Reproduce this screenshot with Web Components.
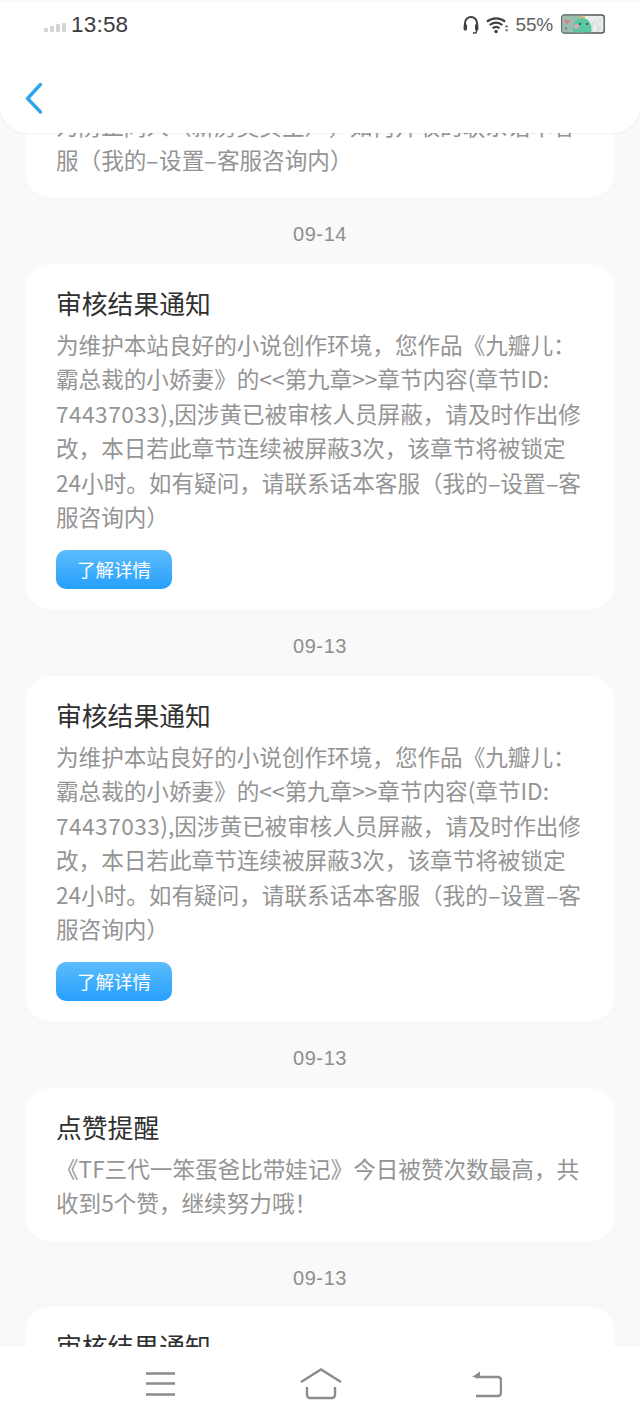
<!DOCTYPE html>
<html>
<head>
<meta charset="utf-8">
<style>
  html, body { margin: 0; height: 100%; }
  body { width: 640px; height: 1422px; overflow: hidden; background: #faf8f9; font-family: "Noto Sans CJK SC", "Noto Sans", sans-serif; }
  /* the reference font has a longer hyphen and wider digits */
  .h { display: inline-block; width: 12.7px; text-align: center; transform: scaleX(1.8); }
  .n { letter-spacing: .5px; }
</style>
</head>
<body>
<app-screen>
  <status-header slot="header"></status-header>
  <notice-card clipped>
    <span slot="body">为防止同人（新房契买主），如何开收的联系话本客<br>服（我的<span class="h">-</span>设置<span class="h">-</span>客服咨询内）</span>
  </notice-card>
  <date-label>09-14</date-label>
  <notice-card title="审核结果通知" action="了解详情">
    <span slot="body">为维护本站良好的小说创作环境，您作品《九瓣儿：<br>霸总裁的小娇妻》的&lt;&lt;第九章&gt;&gt;章节内容(章节ID:<br><span class="n">74437033</span>),因涉黄已被审核人员屏蔽，请及时作出修<br>改，本日若此章节连续被屏蔽3次，该章节将被锁定<br>24小时。如有疑问，请联系话本客服（我的<span class="h">-</span>设置<span class="h">-</span>客<br>服咨询内）</span>
  </notice-card>
  <date-label>09-13</date-label>
  <notice-card title="审核结果通知" action="了解详情">
    <span slot="body">为维护本站良好的小说创作环境，您作品《九瓣儿：<br>霸总裁的小娇妻》的&lt;&lt;第九章&gt;&gt;章节内容(章节ID:<br><span class="n">74437033</span>),因涉黄已被审核人员屏蔽，请及时作出修<br>改，本日若此章节连续被屏蔽3次，该章节将被锁定<br>24小时。如有疑问，请联系话本客服（我的<span class="h">-</span>设置<span class="h">-</span>客<br>服咨询内）</span>
  </notice-card>
  <date-label>09-13</date-label>
  <notice-card title="点赞提醒">
    <span slot="body">《TF三代一笨蛋爸比带娃记》今日被赞次数最高，共<br>收到5个赞，继续努力哦！</span>
  </notice-card>
  <date-label>09-13</date-label>
  <notice-card title="审核结果通知"></notice-card>
  <nav-bar slot="footer"></nav-bar>
</app-screen>

<script>
class AppScreen extends HTMLElement {
  constructor() {
    super();
    this.attachShadow({ mode: 'open' });
    this.shadowRoot.innerHTML = `
      <style>
        :host { display: block; position: relative; width: 640px; height: 1422px; overflow: hidden; }
        .list { display: flex; flex-direction: column; padding: 0 26px; margin-top: 99.6px; }
        ::slotted([slot="header"]) { position: absolute; top: 0; left: 0; z-index: 2; }
        ::slotted([slot="footer"]) { position: absolute; bottom: 0; left: 0; z-index: 2; }
      </style>
      <slot name="header"></slot>
      <div class="list"><slot></slot></div>
      <slot name="footer"></slot>
    `;
  }
}

class StatusHeader extends HTMLElement {
  constructor() {
    super();
    this.attachShadow({ mode: 'open' });
    this.shadowRoot.innerHTML = `
      <style>
        :host { display: block; width: 640px; height: 133px; box-sizing: border-box; background: #faf8f9; padding-top: 2px; }
        .panel { height: 131px; box-sizing: border-box; background: #fff; border-radius: 0 0 27px 27px; box-shadow: 0 1px 2px rgba(0,0,0,.05); display: flex; flex-direction: column; }
        .status { height: 46px; display: flex; align-items: center; padding: 0 35px 0 44px; color: #3c3c3c; }
        .bars { display: flex; align-items: flex-end; gap: 2px; height: 10px; margin-right: 5px; margin-top: 3px; }
        .bars i { display: block; width: 4px; background: #d4d4d4; border-radius: 1px; }
        .time { font: 22.5px "Liberation Sans", sans-serif; letter-spacing: .2px; }
        .right { margin-left: auto; display: flex; align-items: center; }
        .pct { font: 19px "Liberation Sans", sans-serif; letter-spacing: -.2px; color: #606060; margin: 0 8px 0 7px; }
        .back { margin: 33px 0 0 24px; width: 22px; height: 34px; }
      </style>
      <div class="panel">
        <div class="status">
          <div class="bars"><i style="height:4px"></i><i style="height:6px"></i><i style="height:8px"></i><i style="height:9px"></i></div>
          <span class="time">13:58</span>
          <div class="right">
            <svg width="16" height="18" viewBox="1 1 16 18" style="margin-right:7px"><path d="M3 11V8a6 6 0 0 1 12 0v3" fill="none" stroke="#404040" stroke-width="2"/><rect x="1.6" y="9" width="3.4" height="6.5" rx="1.5" fill="#404040"/><rect x="13" y="9" width="3.4" height="6.5" rx="1.5" fill="#404040"/><path d="M14.5 15v1.5a1.5 1.5 0 0 1-1.5 1.5h-2" fill="none" stroke="#404040" stroke-width="1.5"/></svg>
            <svg width="23" height="20" viewBox="0 0 24 20"><g fill="none" stroke="#404040" stroke-width="2.4"><path d="M1 6.5a15 15 0 0 1 19 0"/><path d="M4 10a10 10 0 0 1 13 0"/><path d="M7 13.4a5.4 5.4 0 0 1 7 0"/></g><circle cx="10.5" cy="16.8" r="1.8" fill="#404040"/><path d="M21.5 10l-2 2.4h4zM21.5 17l-2-2.4h4z" fill="#606060"/></svg>
            <span class="pct">55%</span>
            <svg width="44" height="20" viewBox="0 0 44 20" style="margin-top:-2px">
              <rect x=".8" y="1" width="42.4" height="18" rx="2.5" fill="#e8eeec" stroke="#4f5a58" stroke-width="1.4"/>
              <path d="M1.500 1.700h21v16.600h-21z" fill="#9dbdb2"/>
              <path d="M6 6.500c-1-1.500-3.500-.5-2.500 1.200L6 10l2.500-2.300C9.500 6 7 5 6 6.500z" fill="#d97a80"/>
              <circle cx="5" cy="14.500" r="1.300" fill="#7c8a7e"/>
              <path d="M12 18.300c-1-8 2-14.300 9-14.300s10.500 6.300 9.500 14.300z" fill="#5cc7a3"/>
              <path d="M19 1.500l2.500 1.500 2.500-1.500v3l-2.500-1-2.500 1z" fill="#e8c34f"/>
              <circle cx="15.500" cy="12.500" r="2.300" fill="#f3a6b0"/>
              <circle cx="19" cy="10" r="1" fill="#244"/><circle cx="26" cy="10" r="1" fill="#244"/>
              <path d="M31 18c0-6 1-11 3-11s3 5 3 11" fill="none" stroke="#d6d6d0" stroke-width="1"/>
              <circle cx="39" cy="6" r="1.200" fill="#e8cfcf"/><circle cx="39" cy="14" r="1.200" fill="#e8cfcf"/>
            </svg>
          </div>
        </div>
        <svg class="back" viewBox="0 0 22 34"><path d="M16.500 3.500 3.500 17.500 16.500 31" fill="none" stroke="#2fa5f0" stroke-width="3.400" stroke-linecap="round" stroke-linejoin="round"/></svg>
      </div>
    `;
  }
}

class NoticeCard extends HTMLElement {
  constructor() {
    super();
    this.attachShadow({ mode: 'open' });
    const title = this.getAttribute('title');
    const action = this.getAttribute('action');
    this.shadowRoot.innerHTML = `
      <style>
        :host { display: block; background: #fff; border-radius: 24px; padding: 20px 30px; text-spacing-trim: space-all; }
        :host([clipped]) { padding-top: 9px; }
        .title { font-size: 25.8px; line-height: 37px; color: #303030; }
        .body { font-size: 22.6px; line-height: 34.4px; color: #949494; white-space: nowrap; margin-top: 7px; }
        :host([clipped]) .body { margin-top: 0; }
        button { display: block; width: 116px; height: 39px; margin-top: 16px; padding: 0 0 2px; border: 0; border-radius: 10px; color: #fff; font: 18.5px "Noto Sans CJK SC", sans-serif; background: linear-gradient(#5dbcfd, #269ffc); }
      </style>
      ${title ? `<div class="title">${title}</div>` : ''}
      <div class="body"><slot name="body"></slot></div>
      ${action ? `<button>${action}</button>` : ''}
    `;
  }
}

class DateLabel extends HTMLElement {
  constructor() {
    super();
    this.attachShadow({ mode: 'open' });
    this.shadowRoot.innerHTML = `
      <style>
        :host { display: block; height: 66.6px; text-align: center; font: 20px/74px "Liberation Sans", sans-serif; letter-spacing: .6px; color: #8f8f8f; }
      </style>
      <slot></slot>
    `;
  }
}

class NavBar extends HTMLElement {
  constructor() {
    super();
    this.attachShadow({ mode: 'open' });
    this.shadowRoot.innerHTML = `
      <style>
        :host { display: block; width: 640px; height: 75px; background: #fff; }
        .row { display: flex; justify-content: space-between; padding: 24px 138px 0 145px; }
        svg { display: block; }
      </style>
      <div class="row">
        <svg width="30" height="26" viewBox="0 0 30 26"><path d="M1 2.500h29M1 12.500h29M1 23.500h29" stroke="#8c8c8c" stroke-width="2.400"/></svg>
        <svg width="42" height="32" viewBox="0 0 42 32" style="margin:-3px 5px 0 0"><path d="M1 14 21 1.500 41 14M7 19v8a3 3 0 0 0 3 3h22a3 3 0 0 0 3-3v-8" fill="none" stroke="#8c8c8c" stroke-width="2.400"/></svg>
        <svg width="30" height="28" viewBox="0 0 30 28"><path d="M3 6h23a3 3 0 0 1 3 3v13a3 3 0 0 1-3 3H4" fill="none" stroke="#8c8c8c" stroke-width="2.400"/><path d="M0 6 8 .5v6z" fill="#8c8c8c"/></svg>
      </div>
    `;
  }
}

customElements.define('app-screen', AppScreen);
customElements.define('status-header', StatusHeader);
customElements.define('notice-card', NoticeCard);
customElements.define('date-label', DateLabel);
customElements.define('nav-bar', NavBar);
</script>
</body>
</html>
